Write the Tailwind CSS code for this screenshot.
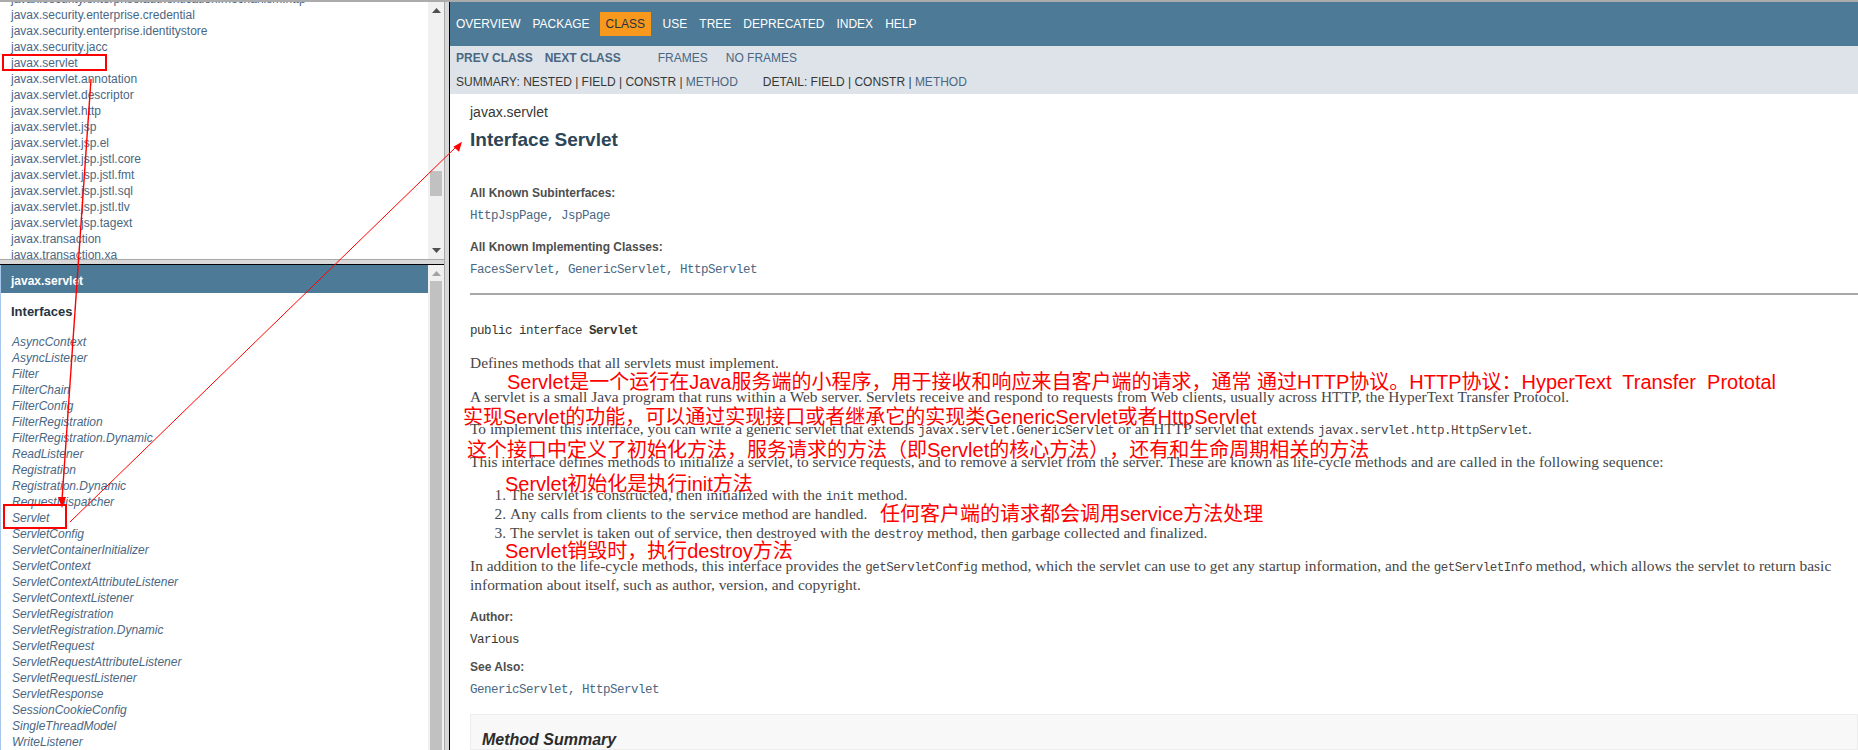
<!DOCTYPE html>
<html lang="en">
<head>
<meta charset="utf-8">
<title>Interface Servlet</title>
<script src="https://cdn.jsdelivr.net/npm/@tailwindcss/browser@4"></script>
</head>
<body class="relative w-[1858px] h-[750px] overflow-hidden bg-white font-['Liberation_Sans','Noto_Sans_CJK_SC',sans-serif] text-[12px] leading-4 text-[#353833]">
<div class="h-[2px] bg-[#ababab]"></div>
<div class="flex h-[748px] overflow-hidden">
  <!-- left frames -->
  <div class="w-[444px] flex flex-col shrink-0">
    <div class="h-[257px] flex overflow-hidden">
      <div class="flex-1 overflow-hidden pl-[11px] text-[#4a6782]">
        <div class="-mt-[11px]">
          <div>javax.security.enterprise.authentication.mechanism.http</div>
          <div>javax.security.enterprise.credential</div>
          <div>javax.security.enterprise.identitystore</div>
          <div>javax.security.jacc</div>
          <div>javax.servlet</div>
          <div>javax.servlet.annotation</div>
          <div>javax.servlet.descriptor</div>
          <div>javax.servlet.http</div>
          <div>javax.servlet.jsp</div>
          <div>javax.servlet.jsp.el</div>
          <div>javax.servlet.jsp.jstl.core</div>
          <div>javax.servlet.jsp.jstl.fmt</div>
          <div>javax.servlet.jsp.jstl.sql</div>
          <div>javax.servlet.jsp.jstl.tlv</div>
          <div>javax.servlet.jsp.tagext</div>
          <div>javax.transaction</div>
          <div>javax.transaction.xa</div>
        </div>
      </div>
      <div class="w-4 bg-[#f1f1f1] flex flex-col items-center">
        <div class="h-[17px] flex items-center justify-center"><svg width="9" height="5" viewBox="0 0 9 5"><path d="M4.5 0L9 5H0z" fill="#505050"/></svg></div>
        <div class="mt-[152px] w-3 h-[25px] bg-[#c1c1c1]"></div>
        <div class="flex-1"></div>
        <div class="h-[17px] pb-[1px] flex items-center justify-center"><svg width="9" height="5" viewBox="0 0 9 5"><path d="M0 0H9L4.500 5z" fill="#505050"/></svg></div>
      </div>
    </div>
    <div class="h-[5px] bg-[#d8d8d8] border-t border-[#a8a8a8]"></div>
    <div class="h-px bg-black"></div>
    <div class="flex-1 flex overflow-hidden">
      <div class="flex-1 border-l border-[#a9c8ee] overflow-hidden">
        <div class="h-7 bg-[#4d7a97] pl-[10px] pt-[4px] flex items-center font-bold text-white">javax.servlet</div>
        <div class="mt-[11px] pl-[10px] text-[13px] font-bold text-[#253441]">Interfaces</div>
        <div class="mt-[14px] pl-[11px] italic text-[#4a6782]">
          <div>AsyncContext</div>
          <div>AsyncListener</div>
          <div>Filter</div>
          <div>FilterChain</div>
          <div>FilterConfig</div>
          <div>FilterRegistration</div>
          <div>FilterRegistration.Dynamic</div>
          <div>ReadListener</div>
          <div>Registration</div>
          <div>Registration.Dynamic</div>
          <div>RequestDispatcher</div>
          <div>Servlet</div>
          <div>ServletConfig</div>
          <div>ServletContainerInitializer</div>
          <div>ServletContext</div>
          <div>ServletContextAttributeListener</div>
          <div>ServletContextListener</div>
          <div>ServletRegistration</div>
          <div>ServletRegistration.Dynamic</div>
          <div>ServletRequest</div>
          <div>ServletRequestAttributeListener</div>
          <div>ServletRequestListener</div>
          <div>ServletResponse</div>
          <div>SessionCookieConfig</div>
          <div>SingleThreadModel</div>
          <div>WriteListener</div>
        </div>
      </div>
      <div class="w-4 bg-[#f1f1f1] flex flex-col items-center">
        <div class="h-4 flex items-center justify-center"><svg width="9" height="5" viewBox="0 0 9 5"><path d="M4.500 0L9 5H0z" fill="#a3a3a3"/></svg></div>
        <div class="w-3 flex-1 bg-[#c1c1c1]"></div>
      </div>
    </div>
  </div>
  <!-- frame divider -->
  <div class="w-[5px] bg-[#d8d8d8] border-l border-[#a8a8a8] shrink-0"></div>
  <div class="w-px bg-black shrink-0"></div>
  <!-- right frame -->
  <div class="flex-1 min-w-0 overflow-hidden">
    <nav class="h-11 bg-[#4d7a97] flex items-center pl-0 text-white">
      <span class="px-[6px]">OVERVIEW</span>
      <span class="px-[6px]">PACKAGE</span>
      <span class="mx-[4px] w-[51px] h-6 pl-[6px] flex items-center bg-[#f8981d] text-[#253441]">CLASS</span>
      <span class="ml-[2px] px-[6px]">USE</span>
      <span class="px-[6px]">TREE</span>
      <span class="px-[6px]">DEPRECATED</span>
      <span class="px-[6px]">INDEX</span>
      <span class="px-[6px]">HELP</span>
    </nav>
    <div class="h-12 bg-[#dee3e9] pl-[6px]">
      <div class="h-6 flex items-center text-[#4a6782]">
        <b class="font-bold">PREV CLASS</b>
        <b class="ml-[12px] font-bold">NEXT CLASS</b>
        <span class="ml-[37px]">FRAMES</span>
        <span class="ml-[18px]">NO FRAMES</span>
      </div>
      <div class="h-6 flex items-center">
        <span>SUMMARY: NESTED | FIELD | CONSTR | <span class="text-[#4a6782]">METHOD</span></span>
        <span class="ml-[25px]">DETAIL: FIELD | CONSTR | <span class="text-[#4a6782]">METHOD</span></span>
      </div>
    </div>
    <main class="pl-[20px] text-[#474747]">
      <div class="mt-[10px] text-[14px] text-[#353833]">javax.servlet</div>
      <h1 class="mt-[8px] text-[19px] leading-6 font-bold text-[#2c4557]">Interface Servlet</h1>
      <div class="mt-[33px] font-bold text-[#4e4e4e]">All Known Subinterfaces:</div>
      <div class="mt-[7px] font-['Liberation_Mono',monospace] text-[12.5px] tracking-[-0.5px] text-[#4a6782]">HttpJspPage, JspPage</div>
      <div class="mt-[15px] font-bold text-[#4e4e4e]">All Known Implementing Classes:</div>
      <div class="mt-[7px] font-['Liberation_Mono',monospace] text-[12.5px] tracking-[-0.5px] text-[#4a6782]">FacesServlet, GenericServlet, HttpServlet</div>
      <div class="mt-[15px] h-[2px] bg-[#a8a8a8]"></div>
      <div class="mt-[28px] font-['Liberation_Mono',monospace] text-[12.5px] tracking-[-0.5px] text-[#353833]">public interface <b class="font-bold">Servlet</b></div>
      <div class="font-['Liberation_Serif',serif] text-[15.43px]">
        <p class="mt-[16px]">Defines methods that all servlets must implement.</p>
        <p class="mt-[18px]">A servlet is a small Java program that runs within a Web server. Servlets receive and respond to requests from Web clients, usually across HTTP, the HyperText Transfer Protocol.</p>
        <p class="mt-[16px]">To implement this interface, you can write a generic servlet that extends <code class="font-['Liberation_Mono',monospace] text-[12.5px] leading-[0] tracking-[-0.5px]">javax.servlet.GenericServlet</code> or an HTTP servlet that extends <code class="font-['Liberation_Mono',monospace] text-[12.5px] leading-[0] tracking-[-0.5px]">javax.servlet.http.HttpServlet</code>.</p>
        <p class="mt-[17px]">This interface defines methods to initialize a servlet, to service requests, and to remove a servlet from the server. These are known as life-cycle methods and are called in the following sequence:</p>
        <ol class="mt-[17px] pl-[40px] list-decimal">
          <li>The servlet is constructed, then initialized with the <code class="font-['Liberation_Mono',monospace] text-[12.5px] leading-[0] tracking-[-0.5px]">init</code> method.</li>
          <li class="mt-[3px]">Any calls from clients to the <code class="font-['Liberation_Mono',monospace] text-[12.5px] leading-[0] tracking-[-0.5px]">service</code> method are handled.</li>
          <li class="mt-[3px]">The servlet is taken out of service, then destroyed with the <code class="font-['Liberation_Mono',monospace] text-[12.5px] leading-[0] tracking-[-0.5px]">destroy</code> method, then garbage collected and finalized.</li>
        </ol>
        <p class="mt-[15px] leading-[19px]">In addition to the life-cycle methods, this interface provides the <code class="font-['Liberation_Mono',monospace] text-[12.5px] leading-[0] tracking-[-0.5px]">getServletConfig</code> method, which the servlet can use to get any startup information, and the <code class="font-['Liberation_Mono',monospace] text-[12.5px] leading-[0] tracking-[-0.5px]">getServletInfo</code> method, which allows the servlet to return basic<br>information about itself, such as author, version, and copyright.</p>
      </div>
      <div class="mt-[15px] font-bold text-[#4e4e4e]">Author:</div>
      <div class="mt-[7px] font-['Liberation_Mono',monospace] text-[12.5px] tracking-[-0.5px] text-[#353833]">Various</div>
      <div class="mt-[11px] font-bold text-[#4e4e4e]">See Also:</div>
      <div class="mt-[7px] font-['Liberation_Mono',monospace] text-[12.5px] tracking-[-0.5px] text-[#4a6782]">GenericServlet, HttpServlet</div>
      <div class="mt-[16px] h-[36px] overflow-hidden bg-[#f8f8f8] border border-[#ededed] pl-[11px] pt-[16px] text-[16px] leading-[18px] font-bold italic text-[#2c2c2c]">Method Summary</div>
    </main>
  </div>
</div>

<!-- hand-made red annotations over the page -->
<div class="absolute left-[2px] top-[54px] w-[105px] h-[17px] border-2 border-[#ff0000]"></div>
<div class="absolute left-[3px] top-[504px] w-[64px] h-[25px] border-2 border-[#ff0000]"></div>
<svg class="absolute left-0 top-0" width="1858" height="750" viewBox="0 0 1858 750" fill="none">
  <path d="M91 79L62 500" stroke="#ff0000" stroke-width="1.4"/>
  <path d="M58 497L66 497L62 508z" fill="#ff0000"/>
  <path d="M70 522L457 146" stroke="#ff0000" stroke-width="1"/>
  <path d="M453.400 146.700L462 141.700L459 151.700z" fill="#ff0000"/>
</svg>
<div class="text-[20px] leading-6 text-[#ff0000] whitespace-pre">
  <div class="absolute left-[507px] top-[370px]">Servlet是一个运行在Java服务端的小程序，用于接收和响应来自客户端的请求，通常 通过HTTP协议。HTTP协议：HyperText  Transfer  Prototal</div>
  <div class="absolute left-[463px] top-[405px]">实现Servlet的功能，可以通过实现接口或者继承它的实现类GenericServlet或者HttpServlet</div>
  <div class="absolute left-[467px] top-[438px] [text-spacing-trim:space-all]">这个接口中定义了初始化方法，服务请求的方法（即Servlet的核心方法），还有和生命周期相关的方法</div>
  <div class="absolute left-[505px] top-[472px]">Servlet初始化是执行init方法</div>
  <div class="absolute left-[880px] top-[502px]">任何客户端的请求都会调用service方法处理</div>
  <div class="absolute left-[505px] top-[539px]">Servlet销毁时，执行destroy方法</div>
</div>
</body>
</html>
